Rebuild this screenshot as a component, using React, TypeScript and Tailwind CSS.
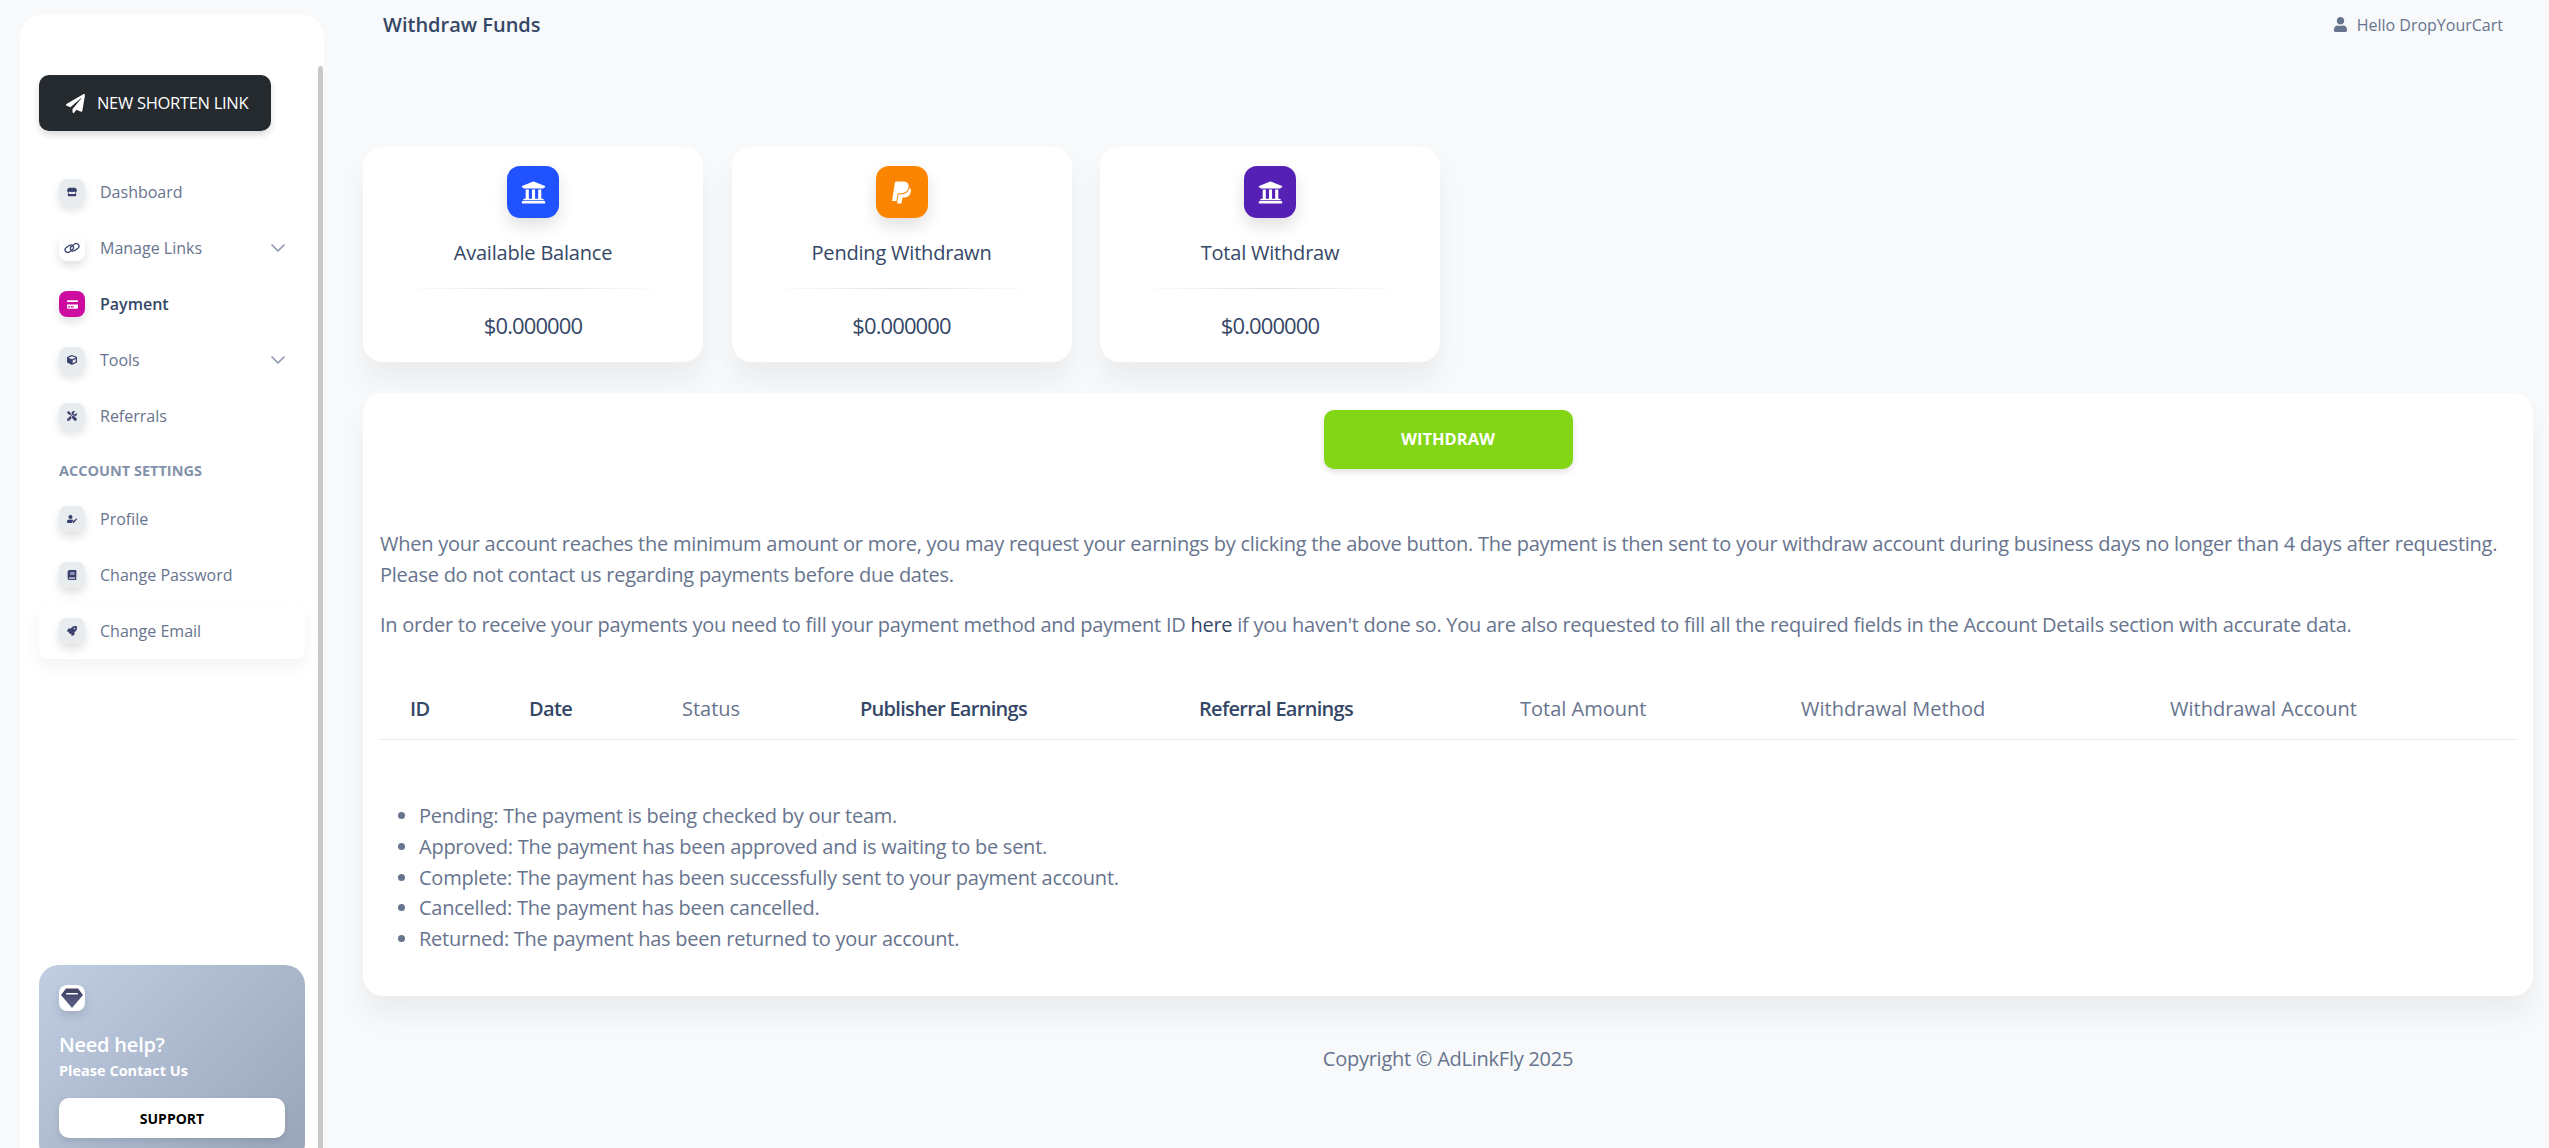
import React from "react";
import { FaPaperPlane, FaUniversity, FaPaypal, FaUser, FaStore, FaCreditCard, FaCube, FaTools, FaUserEdit, FaBook, FaRocket } from "react-icons/fa";
import { ChevronDown } from "lucide-react";

const font = { fontFamily: '"Open Sans", sans-serif' };

function LinkIcon() {
  return (
    <svg width="16" height="16" viewBox="0 0 16 16" fill="none" stroke="#3a416f" strokeWidth="1.3">
      <rect x="0.8" y="6" width="9" height="5.4" rx="2.7" transform="rotate(-35 5.3 8.7)" />
      <rect x="6.2" y="4.6" width="9" height="5.4" rx="2.7" transform="rotate(-35 10.7 7.3)" />
    </svg>
  );
}

function GemIcon() {
  return (
    <svg width="24" height="24" viewBox="0 0 24 24">
      <defs>
        <linearGradient id="gem" x1="0" y1="0" x2="0" y2="1">
          <stop offset="0" stopColor="#3f4164" />
          <stop offset="1" stopColor="#5f6184" />
        </linearGradient>
      </defs>
      <path d="M6 2.5h12l5 6.5-11 13L1 9z" fill="url(#gem)" />
      <rect x="6" y="7" width="12" height="1.4" rx="0.7" fill="#fff" />
    </svg>
  );
}

function NavItem({ icon, label, active, white, chevron, hover }: { icon: React.ReactNode; label: string; active?: boolean; white?: boolean; chevron?: boolean; hover?: boolean }) {
  return (
    <div className={`flex h-[56px] items-center pl-[20px] pr-[15px] rounded-[10px] ${hover ? "bg-white shadow-[0_8px_18px_rgba(0,0,0,0.05)]" : ""}`}>
      <div className={`w-[26px] h-[26px] rounded-[8px] flex items-center justify-center shadow-[0_5px_10px_rgba(0,0,0,0.12)] text-[10px] ${active ? "bg-[#cb0c9f] text-white" : white ? "bg-white text-[#3a416f]" : "bg-[#e9ecef] text-[#3a416f]"}`}>
        {icon}
      </div>
      <span className={`ml-[15px] text-[16px] ${active ? "font-semibold text-[#344767]" : "text-[#67748e]"}`}>{label}</span>
      {chevron && <ChevronDown className="ml-auto text-[#8f9ab3]" size={24} strokeWidth={1.7} />}
    </div>
  );
}

function StatCard({ icon, color, label }: { icon: React.ReactNode; color: string; label: string }) {
  return (
    <div className="w-[340px] h-[215px] rounded-[20px] bg-white shadow-[0_20px_27px_rgba(0,0,0,0.05)] flex flex-col items-center pt-[19px]">
      <div className={`w-[52px] h-[52px] rounded-[13px] ${color} flex items-center justify-center text-white text-[25px] shadow-[0_8px_16px_rgba(0,0,0,0.12)]`}>{icon}</div>
      <div className="mt-[21px] text-[20px] font-medium tracking-[-0.2px] text-[#344767] leading-[28px]">{label}</div>
      <div className="mt-[21px] w-[270px] h-px bg-[linear-gradient(90deg,transparent,rgba(0,0,0,0.12),transparent)]" />
      <div className="mt-[20px] text-[22px] font-medium tracking-[-0.9px] text-[#344767] leading-[32px]">$0.000000</div>
    </div>
  );
}

const heads: [string, string, string][] = [
  ["ID", "w-[119px]", "text-[#344767] font-semibold tracking-[-0.6px]"],
  ["Date", "w-[153px]", "text-[#344767] font-semibold tracking-[-0.6px]"],
  ["Status", "w-[178px]", "text-[#67748e] font-medium"],
  ["Publisher Earnings", "w-[339px]", "text-[#344767] font-semibold tracking-[-0.7px]"],
  ["Referral Earnings", "w-[321px]", "text-[#344767] font-semibold tracking-[-0.7px]"],
  ["Total Amount", "w-[281px]", "text-[#67748e] font-medium"],
  ["Withdrawal Method", "w-[369px]", "text-[#67748e] font-medium"],
  ["Withdrawal Account", "flex-1", "text-[#67748e] font-medium"],
];

export default function App() {
  return (
    <div style={font} className="flex h-[1148px] overflow-hidden bg-[#f8f9fa]">
      <aside className="relative w-[304px] ml-[20px] mt-[14px] shrink-0 bg-white rounded-t-[24px] px-[19px] flex flex-col overflow-hidden">
        <div className="absolute right-[1px] top-[52px] bottom-0 w-[5px] bg-[#c8c8c8] rounded-t-[3px]" />
        <div className="mt-[61px] w-[232px] h-[56px] rounded-[10px] bg-[#252a2f] text-white flex items-center pl-[27px] text-[16.5px] tracking-[-0.3px] shadow-[0_4px_7px_rgba(0,0,0,0.14)] shrink-0">
          <FaPaperPlane className="text-[19px] mr-[12px]" />
          NEW SHORTEN LINK
        </div>
        <nav className="mt-[33px] w-[266px]">
          <NavItem icon={<FaStore />} label="Dashboard" />
          <NavItem icon={<LinkIcon />} label="Manage Links" white chevron />
          <NavItem icon={<FaCreditCard className="text-[11px]" />} label="Payment" active />
          <NavItem icon={<FaCube />} label="Tools" chevron />
          <NavItem icon={<FaTools />} label="Referrals" />
          <div className="pl-[20px] text-[14.5px] font-bold text-[#8392ab] leading-[20px] mt-[17px] mb-[10px]">ACCOUNT SETTINGS</div>
          <NavItem icon={<FaUserEdit />} label="Profile" />
          <NavItem icon={<FaBook />} label="Change Password" />
          <NavItem icon={<FaRocket />} label="Change Email" hover />
        </nav>
        <div className="mt-auto mb-[-15px] w-[266px] h-[198px] shrink-0 rounded-[20px] bg-[linear-gradient(135deg,#c0cde2,#98a4b8)] px-[20px] pt-[20px]">
          <div className="w-[26px] h-[26px] rounded-[8px] bg-white flex items-center justify-center shadow-[0_5px_10px_rgba(0,0,0,0.12)]"><GemIcon /></div>
          <div className="mt-[19px] text-[20px] font-semibold tracking-[-0.2px] text-white leading-[30px]">Need help?</div>
          <div className="text-[14.5px] font-bold text-white leading-[20px] mt-[1px]">Please Contact Us</div>
          <div className="mt-[17px] h-[40px] bg-white rounded-[10px] flex items-center justify-center text-[14px] font-bold text-black shadow-[0_3px_6px_rgba(0,0,0,0.1)]">SUPPORT</div>
        </div>
      </aside>

      <main className="flex-1 ml-[39px] mr-[16px] min-w-0">
        <header className="flex h-[50px] items-center justify-between pb-[1px] pl-[20px] pr-[30px]">
          <h1 className="text-[20px] font-semibold text-[#344767]">Withdraw Funds</h1>
          <div className="flex items-center text-[16px] text-[#67748e]">
            <FaUser className="text-[15px] mr-[9px]" />
            Hello DropYourCart
          </div>
        </header>
        <div className="flex gap-[28.5px] mt-[97px]">
          <StatCard icon={<FaUniversity />} color="bg-[#2152ff]" label="Available Balance" />
          <StatCard icon={<FaPaypal />} color="bg-[#fb8500]" label="Pending Withdrawn" />
          <StatCard icon={<FaUniversity />} color="bg-[#5521b5]" label="Total Withdraw" />
        </div>
        <section className="mt-[31px] h-[603px] rounded-[20px] bg-white shadow-[0_20px_27px_rgba(0,0,0,0.05)] px-[17px] pt-[17px]">
          <div className="flex justify-center">
            <div className="w-[249px] h-[59px] rounded-[10px] bg-[#82d616] text-white text-[16.5px] font-bold flex items-center justify-center shadow-[0_3px_6px_rgba(0,0,0,0.12)]">WITHDRAW</div>
          </div>
          <p className="mt-[59px] text-[20px] leading-[31px] tracking-[-0.25px] text-[#67748e]">When your account reaches the minimum amount or more, you may request your earnings by clicking the above button. The payment is then sent to your withdraw account during business days no longer than 4 days after requesting. Please do not contact us regarding payments before due dates.</p>
          <p className="mt-[19px] text-[20px] leading-[31px] tracking-[-0.25px] text-[#67748e]">In order to receive your payments you need to fill your payment method and payment ID <span className="text-[#344767]">here</span> if you haven't done so. You are also requested to fill all the required fields in the Account Details section with accurate data.</p>
          <div className="mt-[38px] flex h-[62px] items-center border-b border-[#e9ecef] text-[20px] pl-[30px]">
            {heads.map(([t, w, c]) => <div key={t} className={`${w} ${c} shrink-0`}>{t}</div>)}
          </div>
          <ul className="mt-[61px] list-disc pl-[39px] text-[20px] leading-[30.8px] tracking-[-0.25px] text-[#67748e]">
            <li>Pending: The payment is being checked by our team.</li>
            <li>Approved: The payment has been approved and is waiting to be sent.</li>
            <li>Complete: The payment has been successfully sent to your payment account.</li>
            <li>Cancelled: The payment has been cancelled.</li>
            <li>Returned: The payment has been returned to your account.</li>
          </ul>
        </section>
        <footer className="mt-[48px] text-center text-[20px] leading-[30px] tracking-[-0.25px] text-[#67748e]">Copyright © AdLinkFly 2025</footer>
      </main>
    </div>
  );
}
